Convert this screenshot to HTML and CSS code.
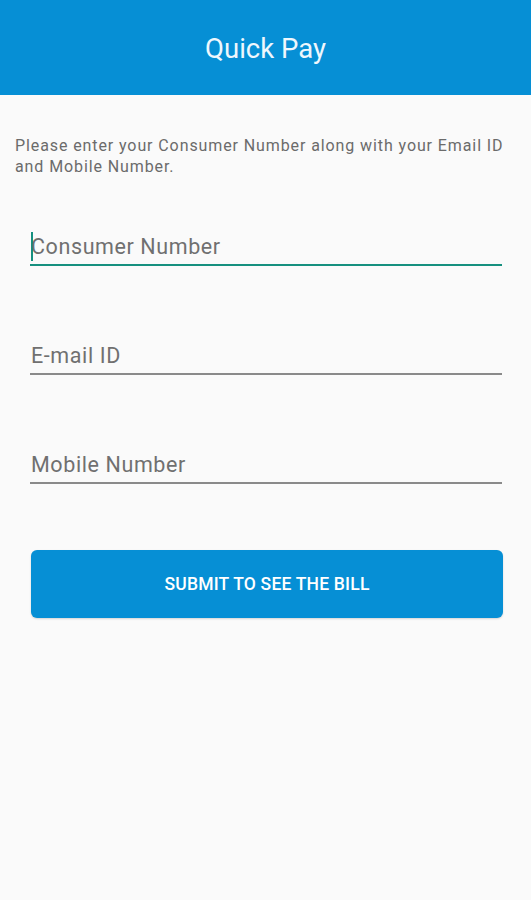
FILE: index.html
```html
<!DOCTYPE html>
<html lang="en">
<head>
  <meta charset="UTF-8">
  <title>Quick Pay</title>
  <link rel="stylesheet" href="styles.css">
</head>
<body>

<header class="topbar">
  <h1>Quick Pay</h1>
</header>

<main class="content">
  <p class="note">Please enter your Consumer Number along with your Email ID<br>and Mobile Number.</p>

  <div class="field focused">
    <span class="caret"></span>
    <span class="hint">Consumer Number</span>
  </div>
  <div class="field">
    <span class="hint">E-mail ID</span>
  </div>
  <div class="field">
    <span class="hint">Mobile Number</span>
  </div>

  <button class="submit-btn">SUBMIT TO SEE THE BILL</button>
</main>

</body>
</html>
```

FILE: styles.css
```css
html, body { margin: 0; padding: 0; }
body {
  font-family: Roboto, "Noto Sans", Arial, sans-serif;
  background-color: #fafafa;
  width: 531px;
  height: 900px;
}

.topbar {
  height: 95px;
  background-color: #068fd5;
  display: flex;
  align-items: center;
  justify-content: center;
}
.topbar h1 {
  margin: 0;
  padding-top: 2px;
  font-size: 27.5px;
  font-weight: 400;
  color: #eef7fd;
}

.content {
  padding: 0 29px 0 30px;
}

.note {
  margin: 40px -20px 51px -15px;
  font-size: 16px;
  letter-spacing: 0.9px;
  line-height: 21px;
  color: #6b6b6b;
  white-space: nowrap;
}

.field {
  display: flex;
  align-items: center;
  height: 36px;
  border-bottom: 2px solid #8a8a8a;
  margin-bottom: 71px;
  padding-left: 1px;
}
.field.focused {
  border-bottom-color: #16907f;
}
.hint {
  font-size: 21.5px;
  letter-spacing: 0.6px;
  color: #707070;
}
.caret {
  display: inline-block;
  width: 2px;
  height: 29px;
  background-color: #16907f;
  margin-right: -2px;
}

.submit-btn {
  display: block;
  width: 472px;
  height: 68px;
  margin: -5px 0 0 1px;
  border: none;
  border-radius: 6px;
  background-color: #068fd5;
  color: #ffffff;
  font-family: Roboto, "Noto Sans", Arial, sans-serif;
  font-size: 17.5px;
  letter-spacing: 0.2px;
  font-weight: 500;
  box-shadow: 0 1px 2px rgba(0,0,0,0.15);
}
```
